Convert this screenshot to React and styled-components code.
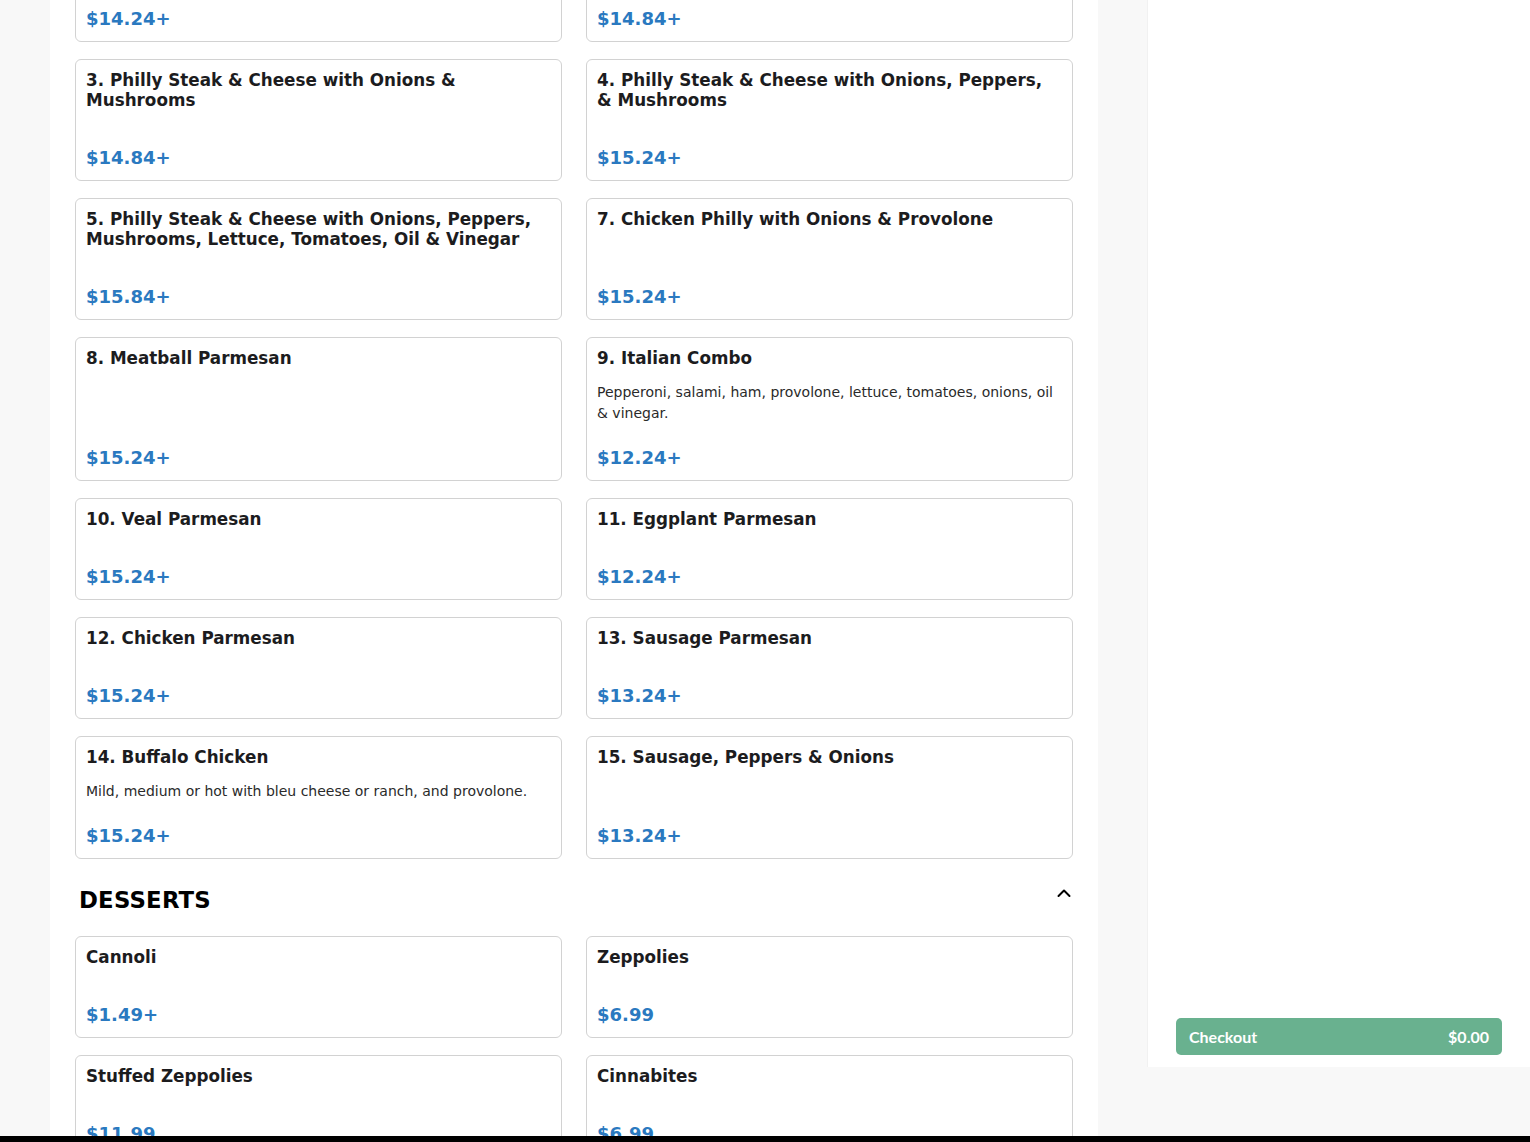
import React, { useLayoutEffect, useRef } from "react"
import styled, { createGlobalStyle } from "styled-components"

const GlobalStyle = createGlobalStyle`
  html, body {
    margin: 0;
    padding: 0;
    height: 100%;
    overflow: hidden;
    background: #f8f8f8;
    font-family: "DejaVu Sans", Verdana, sans-serif;
  }
`

const Page = styled.div`
  display: flex;
  height: 100vh;
  overflow: hidden;
`

const ScrollArea = styled.div`
  width: 1147px;
  flex: none;
  height: 100vh;
  overflow-y: auto;
  scrollbar-width: none;
  &::-webkit-scrollbar { display: none; }
`

const Column = styled.main`
  margin-left: 50px;
  width: 1048px;
  box-sizing: border-box;
  padding: 20px 25px 60px;
  background: #fff;
  min-height: 100%;
`

const CategoryHeader = styled.div`
  display: flex;
  justify-content: space-between;
  padding: 0 1px 0 4px;
  margin: 28px 0 22px;
`

const CategoryTitle = styled.h2`
  margin: 0;
  font-size: 22.8px;
  line-height: 27px;
  font-weight: 700;
  color: #000;
  letter-spacing: 0.2px;
`

const Toggle = styled.button`
  border: 0;
  background: none;
  padding: 0;
  margin-top: -1px;
  align-self: flex-start;
  width: 16px;
  height: 14px;
  cursor: pointer;
  svg { display: block; }
`

const Grid = styled.div`
  display: grid;
  grid-template-columns: 1fr 1fr;
  column-gap: 24px;
  row-gap: 17px;
`

const Card = styled.div`
  display: flex;
  flex-direction: column;
  border: 1px solid #d2d2d2;
  border-radius: 6px;
  padding: 10px;
  background: #fff;
  cursor: pointer;
`

const ItemName = styled.h3`
  margin: 0 0 14px;
  font-size: 16.8px;
  line-height: 20px;
  font-weight: 700;
  color: #1c1c1e;
`

const ItemDesc = styled.p`
  margin: 0 0 22px;
  font-size: 14px;
  line-height: 21px;
  color: #2a2a2a;
`

const Price = styled.div`
  margin-top: auto;
  font-size: 18px;
  line-height: 24px;
  font-weight: 700;
  color: #2a79c0;
`

const Sidebar = styled.aside`
  width: 383px;
  flex: none;
  height: calc(100vh - 75px);
  box-sizing: border-box;
  background: #fff;
  border-left: 1px solid #f1f1f1;
  display: flex;
  flex-direction: column;
  justify-content: flex-end;
  padding: 0 28px 12px 28px;
`

const CheckoutButton = styled.button`
  display: flex;
  justify-content: space-between;
  align-items: center;
  height: 37px;
  padding: 0 13px;
  border: 0;
  border-radius: 5px;
  background: #69b18f;
  color: #fff;
  font-family: Lato, "Noto Sans", sans-serif;
  font-weight: 700;
  font-size: 16px;
  cursor: pointer;
`

const BottomBar = styled.div`
  position: fixed;
  left: 0;
  right: 0;
  bottom: 0;
  height: 6px;
  background: #000;
`

const menu = [
  {
    name: "HOT SUBS",
    items: [
      { name: "1. Philly Steak & Cheese", price: "$14.24+" },
      { name: "2. Philly Steak & Cheese with Onions & Peppers", price: "$14.84+" },
      { name: "3. Philly Steak & Cheese with Onions & Mushrooms", price: "$14.84+" },
      { name: "4. Philly Steak & Cheese with Onions, Peppers, & Mushrooms", price: "$15.24+" },
      { name: "5. Philly Steak & Cheese with Onions, Peppers, Mushrooms, Lettuce, Tomatoes, Oil & Vinegar", price: "$15.84+", anchor: true },
      { name: "7. Chicken Philly with Onions & Provolone", price: "$15.24+" },
      { name: "8. Meatball Parmesan", price: "$15.24+" },
      { name: "9. Italian Combo", desc: "Pepperoni, salami, ham, provolone, lettuce, tomatoes, onions, oil & vinegar.", price: "$12.24+" },
      { name: "10. Veal Parmesan", price: "$15.24+" },
      { name: "11. Eggplant Parmesan", price: "$12.24+" },
      { name: "12. Chicken Parmesan", price: "$15.24+" },
      { name: "13. Sausage Parmesan", price: "$13.24+" },
      { name: "14. Buffalo Chicken", desc: "Mild, medium or hot with bleu cheese or ranch, and provolone.", price: "$15.24+" },
      { name: "15. Sausage, Peppers & Onions", price: "$13.24+" },
    ],
  },
  {
    name: "DESSERTS",
    items: [
      { name: "Cannoli", price: "$1.49+" },
      { name: "Zeppolies", price: "$6.99" },
      { name: "Stuffed Zeppolies", price: "$11.99" },
      { name: "Cinnabites", price: "$6.99" },
    ],
  },
]

function Chevron() {
  return (
    <svg width="16" height="14" viewBox="0 0 16 14" fill="none">
      <polyline points="2.5,10 8,4.5 13.5,10" stroke="#000" strokeWidth="2" strokeLinecap="round" strokeLinejoin="round" />
    </svg>
  )
}

export default function App() {
  const areaRef = useRef(null)
  const anchorRef = useRef(null)

  // the menu is shown scrolled down, with item 5 sitting 198px below the top
  useLayoutEffect(() => {
    const area = areaRef.current
    const anchor = anchorRef.current
    if (!area || !anchor) return
    area.scrollTop += anchor.getBoundingClientRect().top - 198
  }, [])

  return (
    <>
      <GlobalStyle />
      <Page>
        <ScrollArea ref={areaRef}>
          <Column>
            {menu.map((cat) => (
              <section key={cat.name}>
                <CategoryHeader>
                  <CategoryTitle>{cat.name}</CategoryTitle>
                  <Toggle aria-label="Collapse"><Chevron /></Toggle>
                </CategoryHeader>
                <Grid>
                  {cat.items.map((item) => (
                    <Card key={item.name} ref={item.anchor ? anchorRef : undefined}>
                      <ItemName>{item.name}</ItemName>
                      <ItemDesc>{item.desc}</ItemDesc>
                      <Price>{item.price}</Price>
                    </Card>
                  ))}
                </Grid>
              </section>
            ))}
          </Column>
        </ScrollArea>
        <Sidebar>
          <CheckoutButton>
            <span>Checkout</span>
            <span>$0.00</span>
          </CheckoutButton>
        </Sidebar>
      </Page>
      <BottomBar />
    </>
  )
}
